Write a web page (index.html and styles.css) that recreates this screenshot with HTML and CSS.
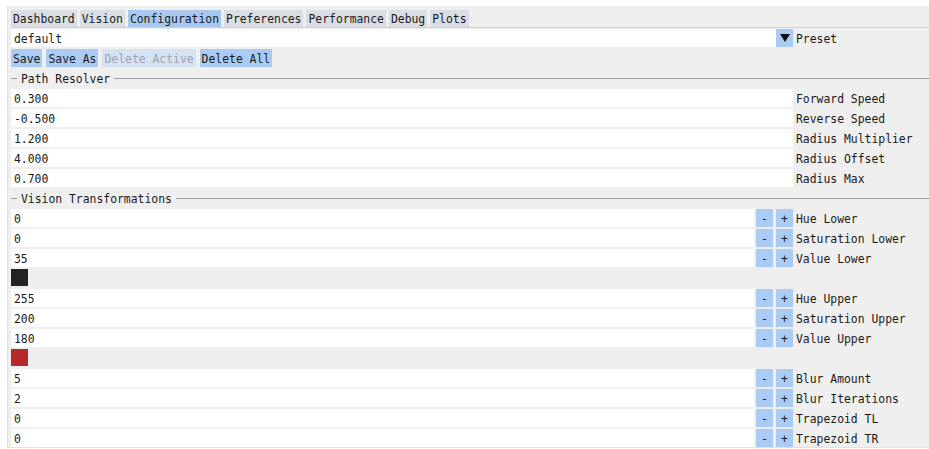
FILE: index.html
```html
<!DOCTYPE html>
<html>
<head>
<meta charset="utf-8">
<link rel="stylesheet" href="styles.css">
</head>
<body>
<div class="window">
  <div class="tabbar">
    <span class="tab">Dashboard</span>
    <span class="tab">Vision</span>
    <span class="tab active">Configuration</span>
    <span class="tab">Preferences</span>
    <span class="tab">Performance</span>
    <span class="tab">Debug</span>
    <span class="tab">Plots</span>
  </div>

  <div class="row first">
    <div class="field combo">default</div>
    <span class="btn arrow"><span class="tri"></span></span>
    <span class="label">Preset</span>
  </div>

  <div class="row buttons">
    <span class="btn">Save</span>
    <span class="btn">Save As</span>
    <span class="btn disabled">Delete Active</span>
    <span class="btn">Delete All</span>
  </div>

  <div class="row sep"><span class="dash"></span><span class="sep-text">Path Resolver</span><span class="line"></span></div>
  <div class="row"><div class="field">0.300</div><span class="label">Forward Speed</span></div>
  <div class="row"><div class="field">-0.500</div><span class="label">Reverse Speed</span></div>
  <div class="row"><div class="field">1.200</div><span class="label">Radius Multiplier</span></div>
  <div class="row"><div class="field">4.000</div><span class="label">Radius Offset</span></div>
  <div class="row"><div class="field">0.700</div><span class="label">Radius Max</span></div>

  <div class="row sep"><span class="dash"></span><span class="sep-text">Vision Transformations</span><span class="line"></span></div>
  <div class="row"><div class="field short">0</div><span class="btn step minus">-</span><span class="btn step">+</span><span class="label">Hue Lower</span></div>
  <div class="row"><div class="field short">0</div><span class="btn step minus">-</span><span class="btn step">+</span><span class="label">Saturation Lower</span></div>
  <div class="row"><div class="field short">35</div><span class="btn step minus">-</span><span class="btn step">+</span><span class="label">Value Lower</span></div>
  <div class="row swatch-row"><span class="swatch dark"></span></div>
  <div class="row"><div class="field short">255</div><span class="btn step minus">-</span><span class="btn step">+</span><span class="label">Hue Upper</span></div>
  <div class="row"><div class="field short">200</div><span class="btn step minus">-</span><span class="btn step">+</span><span class="label">Saturation Upper</span></div>
  <div class="row"><div class="field short">180</div><span class="btn step minus">-</span><span class="btn step">+</span><span class="label">Value Upper</span></div>
  <div class="row swatch-row"><span class="swatch red"></span></div>
  <div class="row"><div class="field short">5</div><span class="btn step minus">-</span><span class="btn step">+</span><span class="label">Blur Amount</span></div>
  <div class="row"><div class="field short">2</div><span class="btn step minus">-</span><span class="btn step">+</span><span class="label">Blur Iterations</span></div>
  <div class="row"><div class="field short">0</div><span class="btn step minus">-</span><span class="btn step">+</span><span class="label">Trapezoid TL</span></div>
  <div class="row"><div class="field short">0</div><span class="btn step minus">-</span><span class="btn step">+</span><span class="label">Trapezoid TR</span></div>
</div>
</body>
</html>
```

FILE: styles.css
```css
html, body {
  margin: 0;
  padding: 0;
  background: #ffffff;
}

body {
  padding: 6px 0 0 7px;
  overflow: hidden;
  font-family: "DejaVu Sans Mono", "Liberation Mono", monospace;
  font-size: 11.4px;
  color: #1a1a1a;
}

.window {
  width: 922px;
  height: 442px;
  box-sizing: border-box;
  background: #efefef;
  border-left: 1px solid #e2e2e2;
  border-bottom: 1px solid #e2e2e2;
  padding: 4px 0 0 3px;
  overflow: hidden;
}

/* tab strip with its underline */
.tabbar {
  display: flex;
  height: 17px;
  border-bottom: 1px solid #c2d4ea;
  margin-right: -4px;
}

.tab {
  display: flex;
  align-items: center;
  box-sizing: border-box;
  height: 17px;
  padding: 1px 2px 0;
  margin-right: 3px;
  background: #dadee4;
  white-space: pre;
}

.tab.active {
  background: #a9c8ef;
}

.row {
  display: flex;
  align-items: center;
  height: 18px;
  margin-top: 2px;
  white-space: pre;
}

.row.first {
  margin-top: 1px;
}

.field {
  box-sizing: border-box;
  width: 782px;
  height: 18px;
  padding: 1px 0 0 3px;
  display: flex;
  align-items: center;
  background: #ffffff;
  flex: none;
}

.field.combo {
  width: 765px;
}

.field.short {
  width: 743px;
}

.label {
  margin-left: 3px;
  padding-top: 1px;
}

.btn {
  display: flex;
  align-items: center;
  justify-content: center;
  box-sizing: border-box;
  height: 18px;
  padding: 1px 2px 0;
  background: #aaccf4;
  flex: none;
}

.btn.disabled {
  background: #d4e2f3;
  color: #a0a5ac;
}

.buttons {
  gap: 4px;
}

/* combo dropdown arrow */
.btn.arrow {
  width: 17px;
  padding: 0;
}

.tri {
  width: 0;
  height: 0;
  border-left: 5px solid transparent;
  border-right: 5px solid transparent;
  border-top: 8px solid #111111;
}

.btn.step {
  width: 17px;
  padding: 1px 0 0;
}

.btn.minus {
  margin-left: 2px;
  margin-right: 3px;
}

/* labelled separator */
.dash {
  width: 6px;
  height: 1px;
  background: #9c9c9c;
  margin-right: 4px;
  flex: none;
}

.sep-text {
  flex: none;
  padding-top: 1px;
}

.line {
  flex: 1;
  height: 1px;
  background: #9c9c9c;
  margin-left: 4px;
}

.swatch-row {
  align-items: flex-start;
}

.swatch {
  width: 17px;
  height: 17px;
}

.swatch.dark {
  background: #232323;
}

.swatch.red {
  background: #b8282a;
}
```
